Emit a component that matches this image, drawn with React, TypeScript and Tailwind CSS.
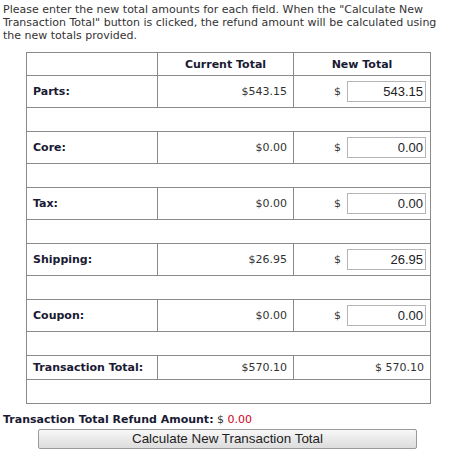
import React from 'react';

interface Row {
  label: string;
  current: string;
  value: string;
}

const rows: Row[] = [
  { label: 'Parts:', current: '$543.15', value: '543.15' },
  { label: 'Core:', current: '$0.00', value: '0.00' },
  { label: 'Tax:', current: '$0.00', value: '0.00' },
  { label: 'Shipping:', current: '$26.95', value: '26.95' },
  { label: 'Coupon:', current: '$0.00', value: '0.00' },
];

const cell = 'border border-[#8a8a8a] px-[6px]';

// spacer row spanning the whole table, no inner dividers
const Spacer = () => (
  <tr className="h-[24px]">
    <td colSpan={3} className="border border-[#8a8a8a]"></td>
  </tr>
);

export default function App() {
  return (
    <div className="w-[450px] h-[463px] bg-white text-[#333] text-[11px] leading-[13px] font-['DejaVu_Sans',Verdana,sans-serif]">
      <p className="pl-[3px] pt-[3px] pr-1">
        Please enter the new total amounts for each field. When the "Calculate New Transaction Total" button is clicked, the refund amount will be calculated using the new totals provided.
      </p>

      {/* totals table */}
      <table className="ml-[26px] mt-[10px] w-[404px] border-collapse border border-[#333] table-fixed">
        <colgroup>
          <col className="w-[131px]" />
          <col className="w-[136px]" />
          <col className="w-[137px]" />
        </colgroup>
        <tbody>
          <tr className="h-[23px]">
            <td className={cell}></td>
            <td className={`${cell} text-center font-bold text-[#1a1a33]`}>Current Total</td>
            <td className={`${cell} text-center font-bold text-[#1a1a33]`}>New Total</td>
          </tr>
          {rows.map((r) => (
            <React.Fragment key={r.label}>
              <tr className="h-[32px]">
                <td className={`${cell} font-bold text-[#1a1a33]`}>{r.label}</td>
                <td className={`${cell} text-right`}>{r.current}</td>
                <td className={`${cell} pr-[4px]`}>
                  <div className="flex items-center justify-end gap-[6px]">
                    <span>$</span>
                    <input
                      readOnly
                      value={r.value}
                      className="w-[79px] h-[21px] border border-[#b5b5b5] px-[2px] text-right text-[13px] text-[#222] font-['Liberation_Sans',Arial,sans-serif] outline-none"
                    />
                  </div>
                </td>
              </tr>
              <Spacer />
            </React.Fragment>
          ))}
          <tr className="h-[24px]">
            <td className={`${cell} font-bold text-[#1a1a33]`}>Transaction Total:</td>
            <td className={`${cell} text-right`}>$570.10</td>
            <td className={`${cell} text-right`}>$ 570.10</td>
          </tr>
          <Spacer />
        </tbody>
      </table>

      <div className="mt-[9px] pl-[3px]">
        <span className="font-bold text-[#1a1a33]">Transaction Total Refund Amount:</span> $ <span className="text-[#d0021b]">0.00</span>
      </div>

      <div className="pl-[38px] mt-[3px]">
        <button className="w-[379px] h-[20px] rounded-[2px] border border-[#9a9a9a] bg-gradient-to-b from-[#f8f8f8] to-[#dcdcdc] text-[13.4px] leading-[18px] text-[#222] font-['Liberation_Sans',Arial,sans-serif]">
          Calculate New Transaction Total
        </button>
      </div>
    </div>
  );
}
